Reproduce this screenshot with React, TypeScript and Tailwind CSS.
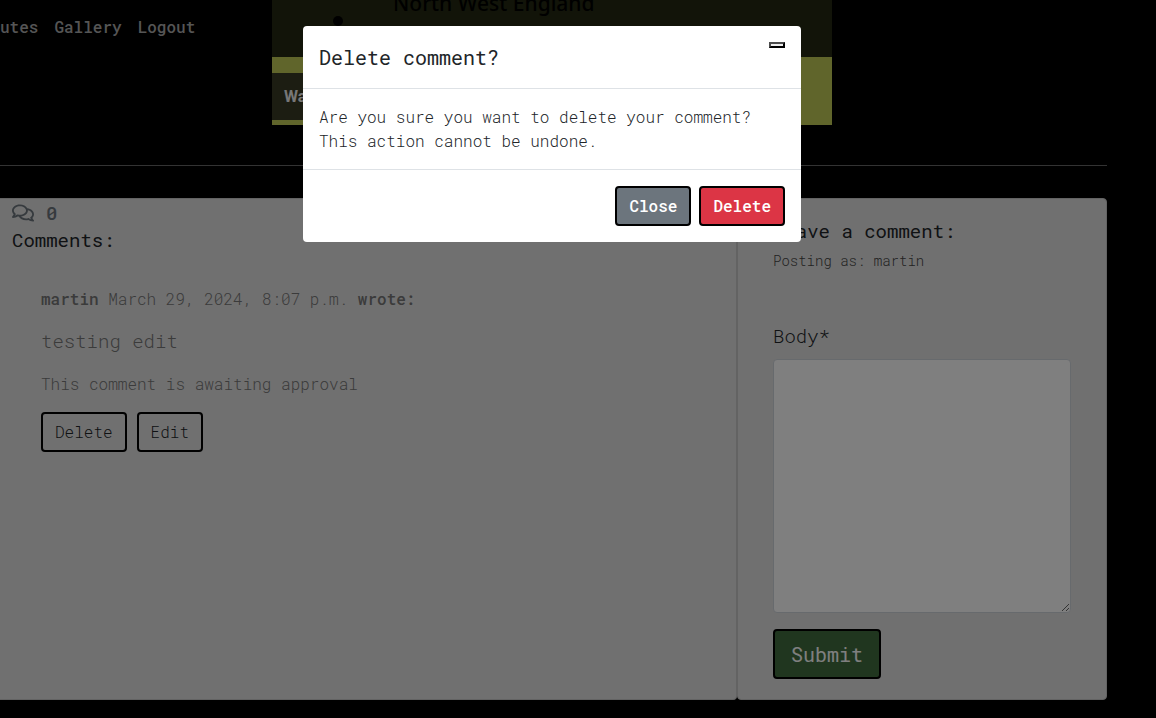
import { FaRegComments } from "react-icons/fa";

function SiteHeader() {
  return (
    <header className="flex h-[125px]">
      <nav className="w-[272px] shrink-0 pt-[15px]" aria-label="Main">
        <ul className="flex gap-4 text-base font-medium text-[#aaaaaa]">
          <li><a href="#routes">utes</a></li>
          <li><a href="#gallery">Gallery</a></li>
          <li><a href="#logout">Logout</a></li>
        </ul>
      </nav>
      <section className="flex w-[560px] flex-col bg-[#c0ca56]">
        <div className="flex h-[57px] items-start bg-[#242812] pl-[61px] font-['Noto_Sans',sans-serif] text-[21px] leading-7 font-medium text-black">
          <span className="mt-4 h-[10px] w-[10px] rounded-full bg-black" />
          <span className="-mt-[11px] pl-[50px]">North West England</span>
        </div>
        <div className="mt-4 flex h-[47px] w-40 items-center bg-[#383a24] pl-3 font-[Roboto,sans-serif] text-base font-bold text-[#eeeeee]">
          Wa
        </div>
      </section>
    </header>
  );
}

function Comments() {
  return (
    <section className="min-w-0 grow rounded-r border border-l-0 border-[#c6c6c6] bg-[#e0e0e0] pl-3">
      <p className="flex items-center gap-3 pt-0.5 text-[19px] leading-6 font-medium text-[#6c757d]">
        <FaRegComments className="h-5 w-[22px]" aria-hidden="true" />
        0
      </p>
      <h3 className="mt-[3px] text-[19px] leading-6 text-[#212529]">Comments:</h3>
      <article className="mt-[35px] pl-[29px] font-light text-[#767676]">
        <p className="text-base leading-6">
          <b className="font-medium">martin</b> March 29, 2024, 8:07 p.m. <b className="font-medium">wrote:</b>
        </p>
        <p className="mt-4 text-[19px] leading-7">testing edit</p>
        <p className="mt-[17px] text-base leading-6">This comment is awaiting approval</p>
        <div className="mt-4 flex gap-[10px] text-base leading-6 text-[#212529]">
          <button type="button" className="rounded border-2 border-black px-3 py-1.5">Delete</button>
          <button type="button" className="rounded border-2 border-black px-3 py-1.5">Edit</button>
        </div>
      </article>
    </section>
  );
}

function CommentForm() {
  return (
    <section className="w-[370px] shrink-0 rounded border border-[#c6c6c6] bg-[#e0e0e0] px-[35px] pt-5 pb-5">
      <h3 className="text-[19px] leading-6 text-[#212529]">Leave a comment:</h3>
      <p className="mt-2 text-sm leading-5 font-light text-[#444444]">Posting as: martin</p>
      <form className="mt-[51px]" onSubmit={(e) => e.preventDefault()}>
        <label htmlFor="body" className="block text-[19px] leading-7 font-light text-[#212529]">Body*</label>
        <textarea
          id="body"
          className="mt-[9px] block h-[254px] w-full rounded border border-[#ced4da] bg-white p-3 text-base"
        />
        <button
          type="submit"
          className="mt-4 rounded border-2 border-black bg-[#406c3e] px-4 py-2 text-xl leading-[30px] text-white"
        >
          Submit
        </button>
      </form>
    </section>
  );
}

function DeleteDialog() {
  return (
    <div className="absolute inset-0 z-10 flex items-start justify-center bg-black/50 pt-[26px] pr-[52px]">
      <div
        role="dialog"
        aria-modal="true"
        aria-labelledby="dialog-title"
        className="w-full max-w-[498px] rounded bg-white text-[#212529]"
      >
        <div className="flex items-start justify-between border-b border-[#dee2e6] p-4">
          <h5 id="dialog-title" className="text-xl leading-[30px]">Delete comment?</h5>
          <button
            type="button"
            aria-label="Close dialog"
            className="h-1.5 w-4 border-2 border-t-[#4c4c4c] border-r-black border-b-black border-l-[#4c4c4c] bg-[#efefef]"
          />
        </div>
        <p className="border-b border-[#dee2e6] p-4 text-base leading-6 font-light">
          Are you sure you want to delete your comment? This action cannot be undone.
        </p>
        <div className="flex justify-end gap-2 p-4 text-base leading-6 font-medium text-white">
          <button type="button" className="rounded border-2 border-black bg-[#6c757d] px-3 py-1.5">Close</button>
          <button type="button" className="rounded border-2 border-black bg-[#dc3545] px-3 py-1.5">Delete</button>
        </div>
      </div>
    </div>
  );
}

export default function App() {
  return (
    <div className="relative min-h-screen overflow-hidden bg-black font-['Roboto_Mono','Liberation_Mono',monospace]">
      <SiteHeader />
      <main className="mt-10 mr-[49px]">
        <hr className="border-[#666666]" />
        <div className="mt-8 flex">
          <Comments />
          <CommentForm />
        </div>
      </main>
      <DeleteDialog />
    </div>
  );
}
